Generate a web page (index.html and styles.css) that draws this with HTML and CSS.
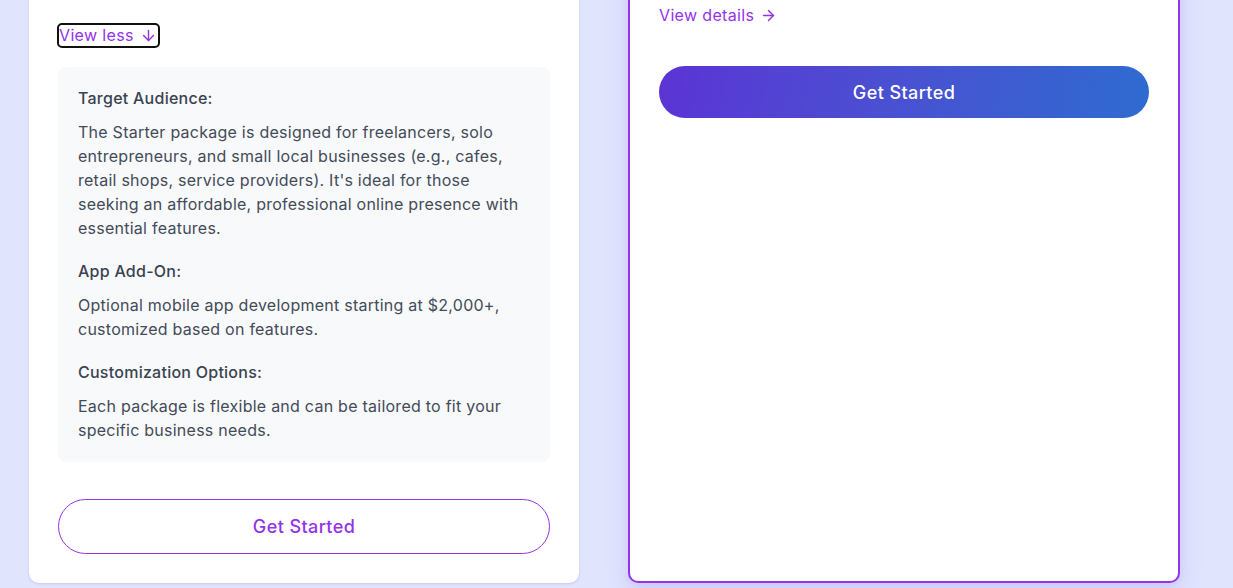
FILE: index.html
```html
<!DOCTYPE html>
<html lang="en">
<head>
<meta charset="utf-8">
<title>Packages</title>
<link rel="stylesheet" href="styles.css">
</head>
<body>
<div class="plans">
  <div class="card">
    <a class="toggle" href="#">View less
      <svg class="ico" viewBox="0 0 24 24" width="17" height="17" fill="none" stroke="currentColor" stroke-width="2" stroke-linecap="round" stroke-linejoin="round"><path d="M12 5v14"/><path d="m19 12-7 7-7-7"/></svg>
    </a>
    <div class="details">
      <div class="section">
        <h4 class="sec-title">Target Audience:</h4>
        <p class="sec-text">The Starter package is designed for freelancers, solo entrepreneurs, and small local businesses (e.g., cafes, retail shops, service providers). It's ideal for those seeking an affordable, professional online presence with essential features.</p>
      </div>
      <div class="section">
        <h4 class="sec-title">App Add-On:</h4>
        <p class="sec-text">Optional mobile app development starting at $2,000+, customized based on features.</p>
      </div>
      <div class="section">
        <h4 class="sec-title">Customization Options:</h4>
        <p class="sec-text">Each package is flexible and can be tailored to fit your specific business needs.</p>
      </div>
    </div>
    <a class="btn btn-outline" href="#">Get Started</a>
  </div>
  <div class="card card-featured">
    <a class="more" href="#">View details
      <svg class="ico" viewBox="0 0 24 24" width="17" height="17" fill="none" stroke="currentColor" stroke-width="2" stroke-linecap="round" stroke-linejoin="round"><path d="M5 12h14"/><path d="m12 5 7 7-7 7"/></svg>
    </a>
    <a class="btn btn-grad" href="#">Get Started</a>
  </div>
</div>
</body>
</html>
```
FILE: styles.css
```css
* { box-sizing: border-box; }
html, body { margin: 0; padding: 0; }
body {
  background: #e0e4fd;
  font-family: Inter, "Noto Sans", sans-serif;
  height: 588px;
  overflow: hidden;
}
.plans {
  display: grid;
  grid-template-columns: 550px 552px;
  column-gap: 49px;
  align-items: stretch;
  padding-left: 29px;
  margin-top: -40px;
}
.card {
  background: #fff;
  border-radius: 10px;
  padding: 65px 29px 29px;
  display: flex;
  flex-direction: column;
  align-items: stretch;
  box-shadow: 0 1px 3px rgba(60, 70, 140, 0.10), 0 1px 2px rgba(60, 70, 140, 0.06);
}
.card-featured {
  border: 2px solid #9333ea;
  padding: 41px 29px 29px;
  box-shadow: 0 10px 25px rgba(124, 58, 237, 0.12), 0 4px 10px rgba(124, 58, 237, 0.08);
}
.toggle, .more {
  display: inline-flex;
  align-items: center;
  gap: 6px;
  align-self: flex-start;
  color: #9333ea;
  font-size: 16px;
  letter-spacing: 0.35px;
  line-height: 21px;
  text-decoration: none;
}
.toggle {
  outline: 2px solid #111;
  border-radius: 3px;
  padding: 0 1px 0 0;
  margin-left: 1px;
  margin-bottom: 21px;
}
.more {
  line-height: 24px;
  margin-bottom: 39px;
}
.details {
  background: #f8f9fb;
  border-radius: 8px;
  padding: 19px 20px 20px;
}
.section + .section { margin-top: 19px; }
.sec-title {
  margin: 0 0 10px;
  font-size: 16px;
  line-height: 24px;
  font-weight: 500;
  letter-spacing: 0.25px;
  color: #3a4350;
}
.sec-text {
  margin: 0;
  font-size: 16px;
  line-height: 24px;
  letter-spacing: 0.25px;
  color: #434b58;
}
.btn {
  display: flex;
  align-items: center;
  justify-content: center;
  border-radius: 9999px;
  font-size: 18px;
  font-weight: 500;
  letter-spacing: 0.4px;
  text-decoration: none;
}
.btn-outline {
  margin-top: 37px;
  height: 55px;
  border: 1px solid #9333ea;
  color: #9333ea;
  background: #fff;
}
.btn-grad {
  height: 52px;
  color: #fff;
  background: linear-gradient(100deg, #5b34d4 0%, #4b4fd2 45%, #2f6bd0 100%);
}
```
